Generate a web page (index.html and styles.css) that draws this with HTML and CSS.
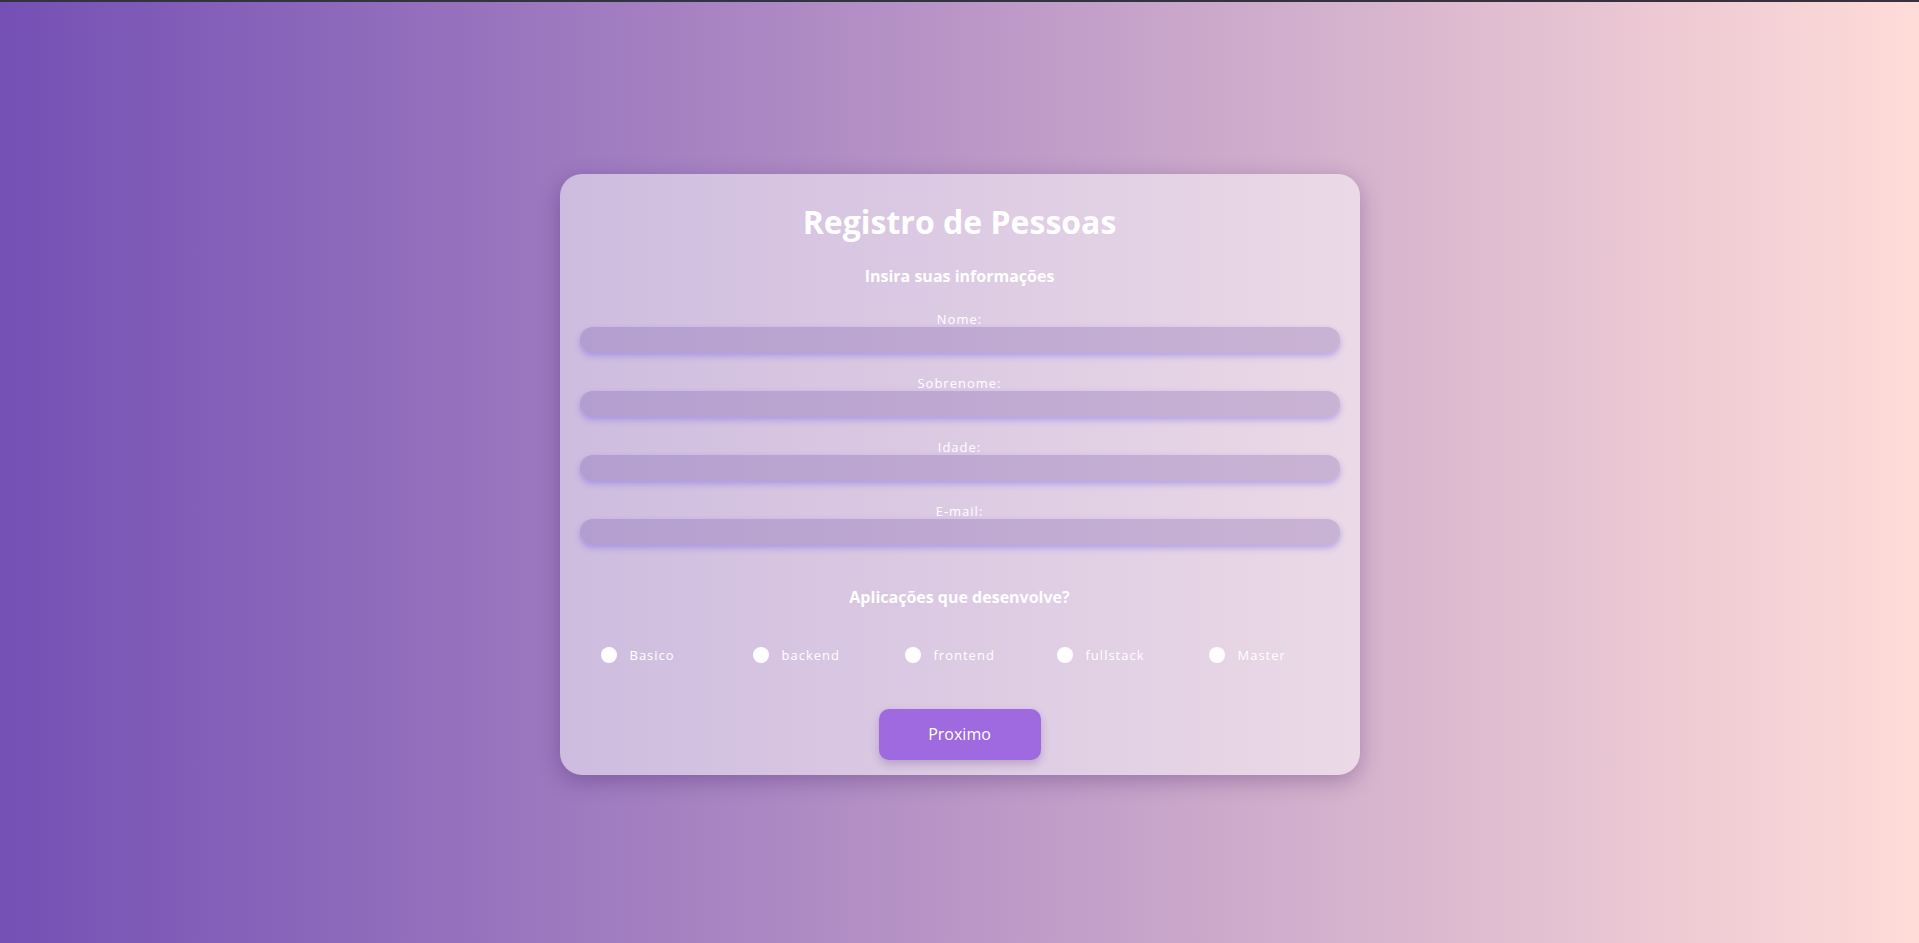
FILE: index.html
```html
<!DOCTYPE html>
<html lang="pt-BR">
<head>
<meta charset="utf-8">
<title>Registro de Pessoas</title>
<link rel="stylesheet" href="styles.css">
</head>
<body>
<div class="topbar"></div>
<main class="stage">
  <form class="card">
    <h1 class="title">Registro de Pessoas</h1>
    <h3 class="subtitle">Insira suas informações</h3>
    <div class="fields">
      <div class="field">
        <label class="field-label" for="nome">Nome:</label>
        <input class="field-input" id="nome" type="text">
      </div>
      <div class="field">
        <label class="field-label" for="sobrenome">Sobrenome:</label>
        <input class="field-input" id="sobrenome" type="text">
      </div>
      <div class="field">
        <label class="field-label" for="idade">Idade:</label>
        <input class="field-input" id="idade" type="text">
      </div>
      <div class="field">
        <label class="field-label" for="email">E-mail:</label>
        <input class="field-input" id="email" type="text">
      </div>
    </div>
    <h3 class="apps-title">Aplicações que desenvolve?</h3>
    <div class="radios">
      <label class="radio-item"><input class="radio" type="radio" name="app"><span>Basico</span></label>
      <label class="radio-item"><input class="radio" type="radio" name="app"><span>backend</span></label>
      <label class="radio-item"><input class="radio" type="radio" name="app"><span>frontend</span></label>
      <label class="radio-item"><input class="radio" type="radio" name="app"><span>fullstack</span></label>
      <label class="radio-item"><input class="radio" type="radio" name="app"><span>Master</span></label>
    </div>
    <div class="actions">
      <button class="next-btn" type="button">Proximo</button>
    </div>
  </form>
</main>
</body>
</html>
```

FILE: styles.css
```css
* { box-sizing: border-box; }

html, body {
  margin: 0;
  padding: 0;
  height: 100%;
}

body {
  font-family: "Open Sans", "Noto Sans", "Liberation Sans", sans-serif;
  background: linear-gradient(to right, #7450b5 0%, #ffdcd8 100%);
  color: #fff;
  display: flex;
  flex-direction: column;
  overflow: hidden;
}

.topbar {
  height: 2px;
  background: #31333f;
  flex: none;
}

.stage {
  flex: 1;
  padding-top: 3px;
  display: flex;
  align-items: center;
  justify-content: center;
}

.card {
  width: 800px;
  height: 601px;
  padding: 28px 20px 0;
  border-radius: 22px;
  background: rgba(255, 255, 255, 0.5);
  box-shadow: 0 6px 22px rgba(40, 10, 80, 0.28);
  display: flex;
  flex-direction: column;
  align-items: stretch;
  text-align: center;
}

.title {
  margin: 0;
  font-size: 32px;
  line-height: 40px;
  font-weight: 700;
  color: #fff;
}

.subtitle {
  margin: 23px 0 0;
  font-size: 16px;
  line-height: 22px;
  font-weight: 700;
  color: #fff;
}

.fields {
  margin-top: 24px;
  display: flex;
  flex-direction: column;
  gap: 22px;
}

.field {
  display: flex;
  flex-direction: column;
  align-items: stretch;
}

.field-label {
  font-size: 13px;
  line-height: 16px;
  letter-spacing: 1px;
  color: #fff;
}

.field-input {
  height: 26px;
  border: none;
  outline: none;
  border-radius: 13px;
  background: rgba(85, 50, 150, 0.22);
  box-shadow: 0 3px 6px rgba(120, 100, 240, 0.45);
  padding: 0 12px;
  font: inherit;
  color: #fff;
}

.apps-title {
  margin: 41px 0 0;
  font-size: 16px;
  line-height: 22px;
  font-weight: 700;
  color: #fff;
}

.radios {
  margin-top: 37px;
  display: grid;
  grid-template-columns: repeat(5, 1fr);
  height: 20px;
}

.radio-item {
  display: flex;
  align-items: center;
  gap: 13px;
  padding-left: 21px;
  font-size: 13px;
  letter-spacing: 1px;
  color: #fff;
  text-align: left;
}

.radio {
  appearance: none;
  -webkit-appearance: none;
  margin: 0;
  width: 16px;
  height: 16px;
  border-radius: 50%;
  background: #fff;
  flex: none;
}

.actions {
  margin-top: 44px;
  display: flex;
  justify-content: center;
}

.next-btn {
  width: 162px;
  height: 51px;
  border: none;
  border-radius: 10px;
  background: #9f69df;
  color: #fff;
  font-family: inherit;
  font-size: 16px;
  box-shadow: 0 4px 8px rgba(60, 20, 100, 0.22);
  cursor: pointer;
}
```
